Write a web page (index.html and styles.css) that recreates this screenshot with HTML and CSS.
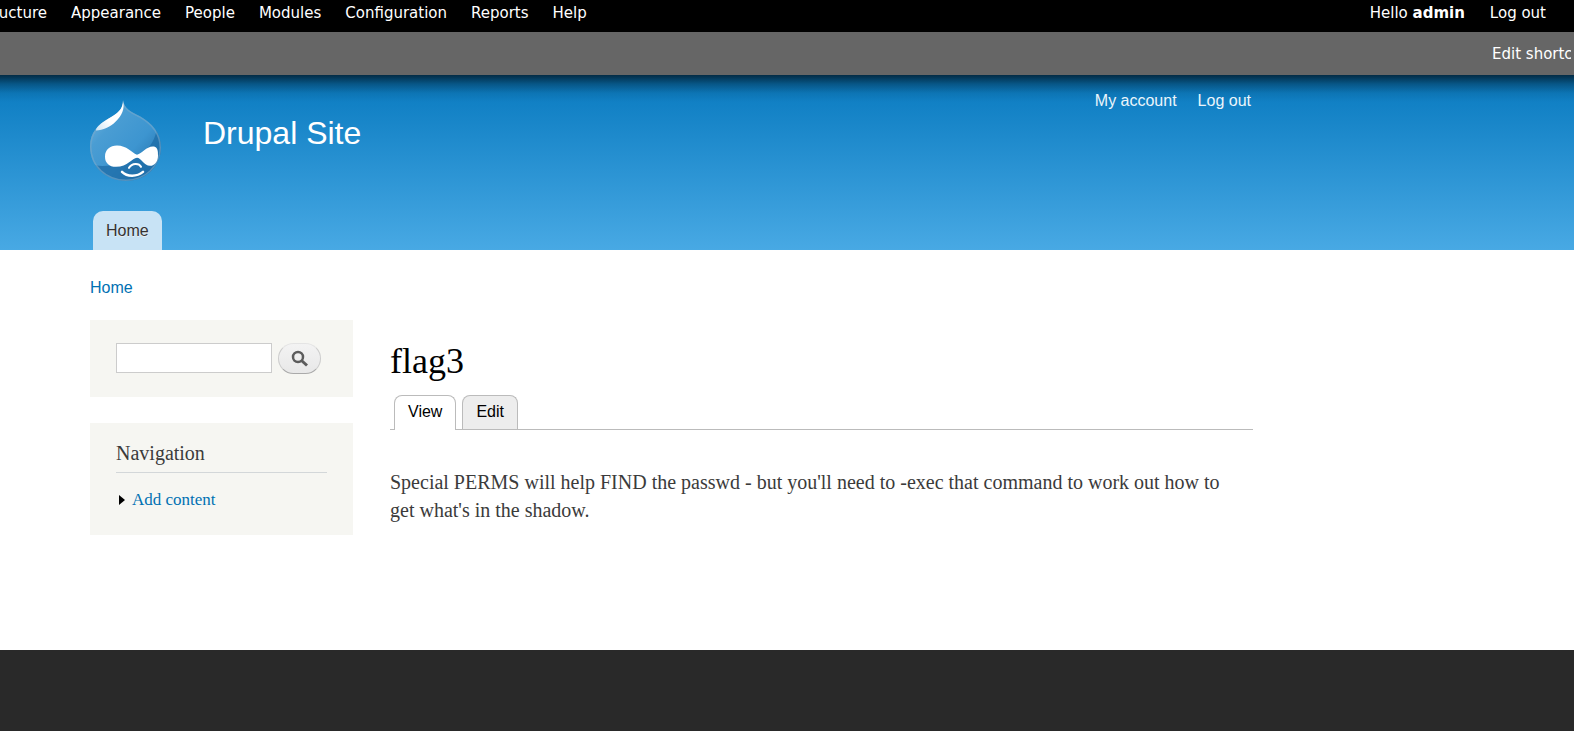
FILE: index.html
```html
<!DOCTYPE html>
<html lang="en">
<head>
<meta charset="utf-8">
<title>flag3 | Drupal Site</title>
<link rel="stylesheet" href="styles.css">
</head>
<body>
<nav class="toolbar" aria-label="Administration">
  <div class="toolbar-menu">
    <span class="clip-start"><a href="#">Structure</a></span>
    <a href="#">Appearance</a>
    <a href="#">People</a>
    <a href="#">Modules</a>
    <a href="#">Configuration</a>
    <a href="#">Reports</a>
    <a href="#">Help</a>
  </div>
  <div class="toolbar-user">
    <a href="#">Hello <strong>admin</strong></a>
    <a href="#">Log out</a>
  </div>
</nav>
<div class="shortcuts"><a href="#">Edit shortcuts</a></div>
<header class="header">
  <div class="container header-inner">
    <a class="logo" href="#" aria-label="Home page">
      <svg width="72" height="81" viewBox="0 0 72 80" preserveAspectRatio="none" aria-hidden="true">
        <defs>
          <linearGradient id="drop" x1="0" y1="0" x2="1" y2="1">
            <stop offset="0" stop-color="#7fbce2"/>
            <stop offset=".3" stop-color="#4a9dd3"/>
            <stop offset=".6" stop-color="#3d95d0"/>
            <stop offset="1" stop-color="#1b659f"/>
          </linearGradient>
          <linearGradient id="shine" x1="1" y1="0" x2="0" y2="1">
            <stop offset="0" stop-color="#fff"/>
            <stop offset=".6" stop-color="#fff"/>
            <stop offset="1" stop-color="#cfe5f4"/>
          </linearGradient>
          <clipPath id="shape"><path d="M33 0C34 9 42 12 50 16C62 23 71 32 71 47C71 66 55 80 36 80C16 80 0 66 0 46C0 32 8 24 19 18C27 13 33 10 33 0Z"/></clipPath>
        </defs>
        <g clip-path="url(#shape)">
          <rect width="72" height="80" fill="url(#drop)"/>
          <path d="M67 27C65 44 54 56 36 61C22 65 8 67 3 63C10 74 22 80 37 80C60 80 76 62 72 40Z" fill="#1f6ea9" opacity=".8"/>
          <path d="M33 0C34 9 42 12 50 16C62 23 71 32 71 47C71 66 55 80 36 80C16 80 0 66 0 46C0 32 8 24 19 18C27 13 33 10 33 0Z" fill="none" stroke="#74a9cc" stroke-width="3" opacity=".6"/>
          <path d="M33 0C35 9 32 15 26 21C20 27 13 30 6 30C6 25 12 20 20 17C28 13 31 9 33 0Z" fill="url(#shine)"/>
        </g>
        <path d="M15 56C15 49 20 45 27 45C37 45 41 52 47 54C52 53 57 45 64 46C68 47 68 51 68 55C68 60 65 65 60 65C54 65 51 57 47 57C42 57 38 66 26 66C19 66 15 62 15 56Z" fill="#fff"/>
        <path d="M39 67C42 62 49 62 51 66" fill="none" stroke="#fff" stroke-width="2" stroke-linecap="round"/>
        <path d="M32 71C37 76 47 76 53 71" fill="none" stroke="#fff" stroke-width="2.500" stroke-linecap="round"/>
      </svg>
    </a>
    <a class="site-name" href="#">Drupal Site</a>
    <nav class="user-links" aria-label="User"><a href="#">My account</a><a href="#">Log out</a></nav>
  </div>
  <nav class="container main-menu" aria-label="Main"><a href="#">Home</a></nav>
</header>
<div class="page">
  <nav class="container breadcrumb" aria-label="Breadcrumb"><a href="#">Home</a></nav>
  <div class="container columns">
    <aside class="sidebar">
      <form class="block search">
        <input type="text" aria-label="Search">
        <button type="button" aria-label="Search">
          <svg width="18" height="18" viewBox="0 0 18 18" aria-hidden="true"><circle cx="7" cy="7" r="5" fill="none" stroke="#5c5c5c" stroke-width="2.500"/><path d="M10.500 10.500L16 15.500" stroke="#5c5c5c" stroke-width="3"/></svg>
        </button>
      </form>
      <section class="block navigation">
        <h2>Navigation</h2>
        <ul><li><svg width="6" height="10" viewBox="0 0 6 10" aria-hidden="true"><path d="M0 0L6 5L0 10Z"/></svg><a href="#">Add content</a></li></ul>
      </section>
    </aside>
    <main class="content">
      <h1>flag3</h1>
      <nav class="tabs" aria-label="Page tabs"><a class="active" href="#">View</a><a href="#">Edit</a></nav>
      <p>Special PERMS will help FIND the passwd - but you'll need to -exec that command to work out how to get what's in the shadow.</p>
    </main>
  </div>
</div>
</body>
</html>
```
FILE: styles.css
```css
* { box-sizing: border-box; }
html { background: #292929; }
body {
  margin: 0;
  font-family: Georgia, "Liberation Serif", serif;
  color: #3b3b3b;
}
a { color: #0071b3; text-decoration: none; }
.container { max-width: 1253px; padding-left: 90px; }

.toolbar {
  display: flex;
  justify-content: space-between;
  height: 32px;
  padding-right: 28px;
  background: #000;
  font: 15px/26px Verdana, "DejaVu Sans", sans-serif;
  white-space: nowrap;
}
.toolbar a, .shortcuts a { color: #fff; }
.toolbar-menu { display: flex; gap: 24px; }
.toolbar-user { display: flex; gap: 25px; }
.clip-start {
  display: flex;
  justify-content: flex-end;
  width: 47px;
  overflow: hidden;
}
.shortcuts {
  display: flex;
  justify-content: flex-end;
  height: 43px;
  padding-right: 3px;
  background: #666;
  font: 15px/44px Verdana, "DejaVu Sans", sans-serif;
}
.shortcuts a { width: 79px; overflow: hidden; white-space: nowrap; }

.header {
  background:
    linear-gradient(rgba(0, 0, 0, .64), rgba(0, 0, 0, .3) 9px, rgba(0, 0, 0, .08) 18px, transparent 27px),
    linear-gradient(#0779bf, #48a9e4);
  font-family: Arial, "Liberation Sans", sans-serif;
}
.header-inner {
  display: flex;
  align-items: flex-start;
  height: 136px;
  padding-top: 25px;
}
.logo svg { display: block; }
.site-name {
  margin: 13px 0 0 41px;
  color: #fff;
  font-size: 32px;
  line-height: 40px;
}
.user-links {
  display: flex;
  gap: 21px;
  margin: -9px 2px 0 auto;
  font-size: 16px;
  line-height: 20px;
}
.user-links a { color: #ebf5fb; }
.main-menu { display: flex; }
.main-menu a {
  margin-left: 3px;
  padding: 0 13px;
  border-radius: 10px 10px 0 0;
  background: #c8e3f5;
  color: #333;
  font-size: 16px;
  line-height: 39px;
  text-shadow: 0 1px #eee;
}

.page { min-height: 400px; background: #fff; }
.breadcrumb {
  padding-top: 28px;
  font: 16px/20px Arial, "Liberation Sans", sans-serif;
}
.columns { display: flex; gap: 37px; padding-top: 22px; }
.sidebar {
  display: flex;
  flex: none;
  flex-direction: column;
  gap: 26px;
  width: 263px;
}
.block { padding: 23px 26px; background: #f6f6f2; }
.search {
  display: flex;
  gap: 6px;
  height: 77px;
}
.search input {
  width: 156px;
  height: 30px;
  border: 1px solid #ccc;
  background: #fff;
}
.search button {
  display: flex;
  align-items: center;
  justify-content: center;
  width: 43px;
  height: 31px;
  padding: 0;
  border: 1px solid #ccc;
  border-top-color: #e4e4e4;
  border-bottom-color: #aaa;
  border-radius: 16px;
  background: linear-gradient(#f3f3f3, #e8e8e8);
}
.navigation { padding-top: 17px; }
.navigation h2 {
  margin: 0 0 15px;
  padding-bottom: 5px;
  border-bottom: 1px solid #d3d7d9;
  font-size: 20px;
  font-weight: 400;
  line-height: 27px;
}
.navigation ul { margin: 0; padding: 0; list-style: none; }
.navigation li {
  display: flex;
  align-items: center;
  gap: 7px;
  padding-left: 3px;
  font-size: 17px;
  line-height: 24px;
}
.content { flex: 1; }
.content h1 {
  margin: 18px 0 11px;
  color: #000;
  font-size: 36px;
  font-weight: 400;
  line-height: 46px;
}
.tabs {
  display: flex;
  gap: 6px;
  height: 35px;
  padding-left: 4px;
  border-bottom: 1px solid #bbb;
  font: 16px/32px Arial, "Liberation Sans", sans-serif;
}
.tabs a {
  height: 34px;
  padding: 0 13px;
  border: 1px solid #bbb;
  border-bottom: 0;
  border-radius: 8px 8px 0 0;
  background: #ededed;
  color: #000;
}
.tabs .active { height: 35px; background: #fff; }
.content p {
  margin: 38px 0 0;
  padding-right: 16px;
  font-size: 20px;
  line-height: 28px;
}
```
